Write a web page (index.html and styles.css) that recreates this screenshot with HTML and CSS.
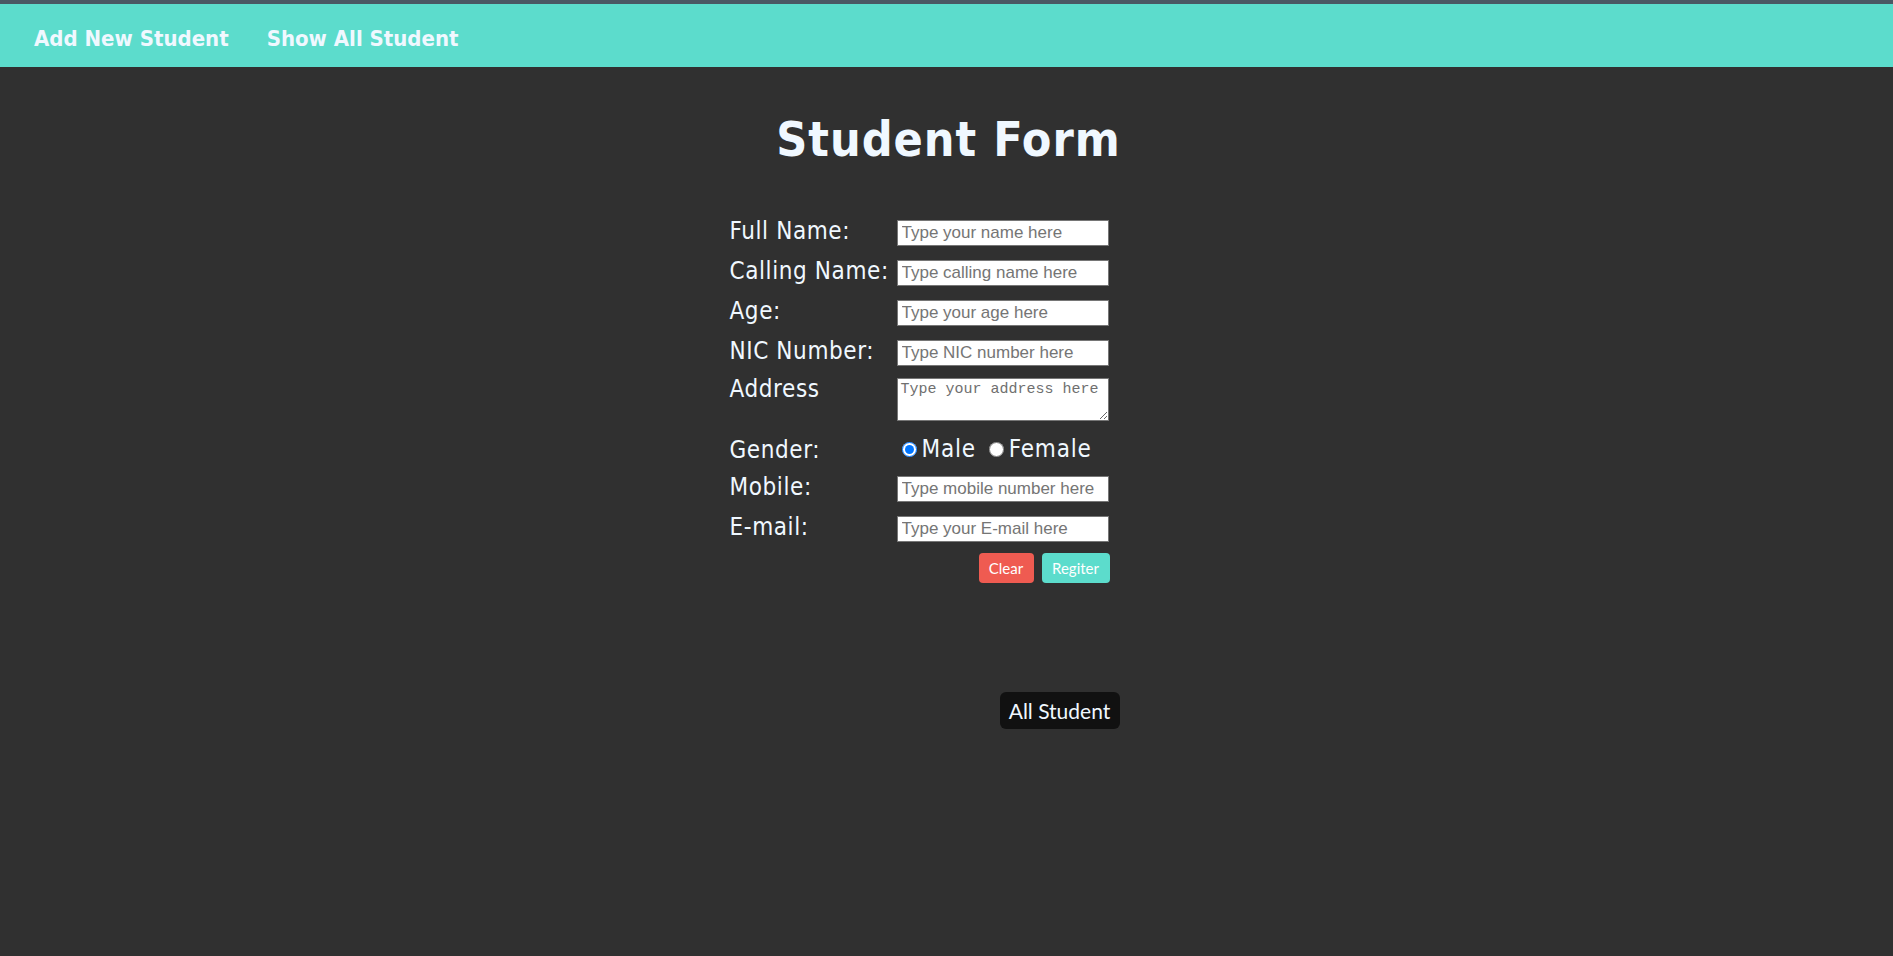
FILE: index.html
```html
<!DOCTYPE html>
<html lang="en">
<head>
<meta charset="utf-8">
<title>Student Form</title>
<link rel="stylesheet" href="styles.css">
</head>
<body>
<header class="topbar">
  <nav class="nav">
    <a class="nav-link" href="#">Add New Student</a>
    <a class="nav-link" href="#">Show All Student</a>
  </nav>
</header>
<main class="main">
  <h1 class="title">Student Form</h1>
  <div class="wrap">
    <form class="form">
      <div class="row">
        <label class="label">Full Name:</label>
        <input class="field" type="text" placeholder="Type your name here">
      </div>
      <div class="row">
        <label class="label">Calling Name:</label>
        <input class="field" type="text" placeholder="Type calling name here">
      </div>
      <div class="row">
        <label class="label">Age:</label>
        <input class="field" type="text" placeholder="Type your age here">
      </div>
      <div class="row row-nic">
        <label class="label">NIC Number:</label>
        <input class="field" type="text" placeholder="Type NIC number here">
      </div>
      <div class="row row-area">
        <label class="label">Address</label>
        <textarea class="area" placeholder="Type your address here"></textarea>
      </div>
      <div class="row row-gender">
        <label class="label">Gender:</label>
        <div class="radios">
          <input class="radio" type="radio" name="g" checked><span class="opt">Male</span>
          <input class="radio radio-2" type="radio" name="g"><span class="opt">Female</span>
        </div>
      </div>
      <div class="row">
        <label class="label">Mobile:</label>
        <input class="field" type="text" placeholder="Type mobile number here">
      </div>
      <div class="row">
        <label class="label">E-mail:</label>
        <input class="field" type="text" placeholder="Type your E-mail here">
      </div>
      <div class="actions">
        <button class="btn btn-clear" type="button">Clear</button>
        <button class="btn btn-reg" type="button">Regiter</button>
      </div>
    </form>
    <div class="all-row">
      <button class="all-btn" type="button">All Student</button>
    </div>
  </div>
</main>
</body>
</html>
```

FILE: styles.css
```css
html, body {
  margin: 0;
  padding: 0;
}
body {
  background: #303030;
  min-height: 956px;
  font-family: "DejaVu Sans Condensed", "DejaVu Sans", sans-serif;
  font-stretch: condensed;
  color: #f0f8ff;
}
.topbar {
  border-top: 4px solid #4a5864;
  background: #5cdccc;
  height: 67px;
  box-sizing: border-box;
}
.nav {
  display: flex;
  gap: 38px;
  padding: 22px 0 0 34px;
}
.nav-link {
  color: #f0f8ff;
  text-decoration: none;
  font-weight: bold;
  font-size: 22px;
  line-height: 25px;
}
.main {
  display: flex;
  flex-direction: column;
  align-items: center;
}
.title {
  margin: 44px 0 0 0;
  font-size: 48px;
  line-height: 56px;
  font-weight: bold;
  letter-spacing: 1px;
  color: #f0f8ff;
  padding-left: 4px;
}
.wrap {
  width: 434px;
  margin-top: 53px;
  display: flex;
  flex-direction: column;
}
.form {
  width: 380px;
  display: flex;
  flex-direction: column;
}
.row {
  display: flex;
  align-items: flex-start;
  margin-bottom: 14px;
}
.row-nic {
  margin-bottom: 12px;
}
.row-area {
  margin-bottom: 13px;
}
.label {
  width: 167px;
  flex: none;
  font-size: 24px;
  line-height: 24px;
  letter-spacing: 0.6px;
  margin-top: -1px;
  color: #f0f8ff;
}
.field {
  width: 212px;
  height: 26px;
  box-sizing: border-box;
  margin: 0;
  border: 1px solid #767676;
  padding: 1px 4px;
  font-family: "Liberation Sans", Arial, sans-serif;
  font-stretch: normal;
  font-size: 17px;
  background: #fff;
}
.field::placeholder {
  color: #757575;
}
.area {
  width: 212px;
  height: 43px;
  box-sizing: border-box;
  margin: 0;
  border: 1px solid #767676;
  padding: 2px 3px;
  font-family: "Liberation Mono", monospace;
  font-size: 15px;
  line-height: 17px;
  resize: both;
  background: #fff;
}
.area::placeholder {
  color: #6f6f6f;
}
.row-gender {
  align-items: center;
  margin-bottom: 12px;
  height: 30px;
}
.row-gender .label {
  margin-top: 1px;
}
.radios {
  display: flex;
  align-items: center;
  padding-left: 5px;
}
.radio {
  width: 15px;
  height: 15px;
  margin: 0 5px 0 0;
}
.radio-2 {
  margin-left: 13px;
}
.opt {
  font-size: 24px;
  line-height: 27px;
  letter-spacing: 0.8px;
  color: #f0f8ff;
}
.actions {
  display: flex;
  justify-content: flex-end;
  gap: 8px;
  margin-top: -3px;
}
.btn {
  height: 30px;
  border: none;
  border-radius: 4px;
  color: #fff;
  font-family: Lato, "Open Sans", sans-serif;
  font-size: 15px;
  padding: 0;
  cursor: pointer;
}
.btn-clear {
  width: 55px;
  background: #ef5b51;
}
.btn-reg {
  width: 68px;
  background: #5cdccc;
}
.all-row {
  display: flex;
  justify-content: flex-end;
  padding-right: 44px;
  margin-top: 109px;
}
.all-btn {
  width: 120px;
  height: 37px;
  border: none;
  border-radius: 6px;
  background: #111111;
  color: #f0f8ff;
  font-family: Lato, "Open Sans", sans-serif;
  font-size: 21px;
  padding: 0;
}
```
